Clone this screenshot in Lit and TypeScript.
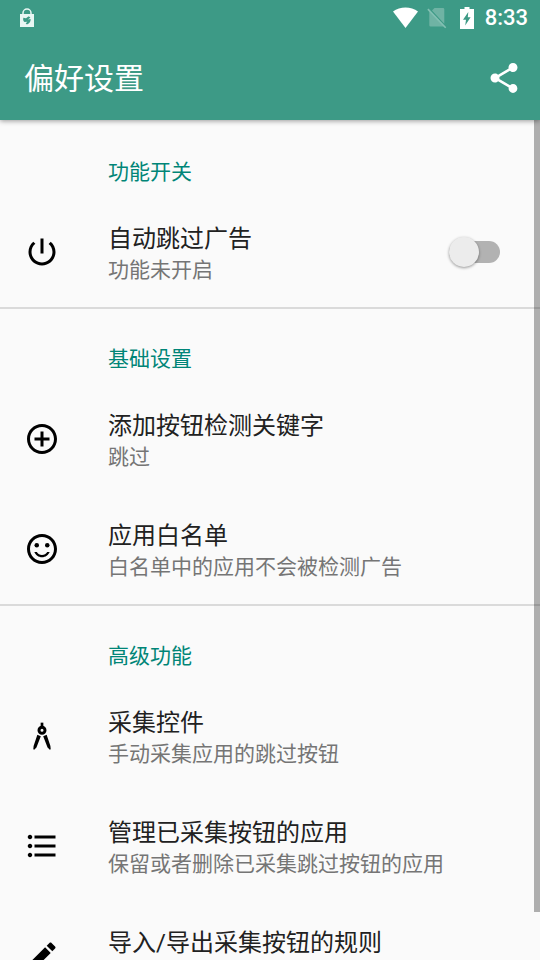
import { LitElement, html, css, svg } from "lit";
import type { SVGTemplateResult } from "lit";
import { customElement, state } from "lit/decorators.js";

const icons: Record<string, SVGTemplateResult> = {
  power: svg`<path d="M13 3h-2v10h2V3zm4.83 2.17l-1.42 1.42C17.99 7.86 19 9.81 19 12c0 3.87-3.13 7-7 7s-7-3.13-7-7c0-2.19 1.01-4.14 2.58-5.42L6.17 5.17C4.23 6.82 3 9.26 3 12c0 4.97 4.03 9 9 9s9-4.03 9-9c0-2.74-1.23-5.18-3.17-6.83z"/>`,
  add: svg`<path d="M13 7h-2v4H7v2h4v4h2v-4h4v-2h-4V7zm-1-5C6.48 2 2 6.48 2 12s4.48 10 10 10 10-4.48 10-10S17.52 2 12 2zm0 18c-4.41 0-8-3.59-8-8s3.59-8 8-8 8 3.59 8 8-3.59 8-8 8z"/>`,
  smile: svg`<circle cx="15.5" cy="9.5" r="1.5"/><circle cx="8.5" cy="9.5" r="1.5"/><path d="M12 16c-1.48 0-2.75-.81-3.45-2H6.88c.8 2.05 2.79 3.5 5.12 3.5s4.32-1.45 5.12-3.5h-1.67c-.7 1.19-1.97 2-3.45 2zm-.01-14C6.47 2 2 6.48 2 12s4.47 10 9.99 10C17.52 22 22 17.52 22 12S17.52 2 11.99 2zM12 20c-4.42 0-8-3.58-8-8s3.58-8 8-8 8 3.58 8 8-3.58 8-8 8z"/>`,
  compass: svg`<path d="M11.1 3.1h1.8v2.4h-1.8z"/><circle cx="12" cy="8.2" r="2" fill="none" stroke="currentColor" stroke-width="2"/><path d="M8.900 11.100l2.300 1.100-2.900 7.400-1.500 1.500-.6-.3.200-2.200zM15.100 11.100l-2.300 1.100 2.900 7.400 1.500 1.500.6-.3-.2-2.200z"/>`,
  list: svg`<path d="M4 10.5c-.83 0-1.5.67-1.5 1.5s.67 1.5 1.5 1.5 1.5-.67 1.5-1.5-.67-1.5-1.5-1.5zm0-6c-.83 0-1.5.67-1.5 1.5S3.17 7.5 4 7.5 5.5 6.83 5.5 6 4.83 4.5 4 4.5zm0 12c-.83 0-1.5.68-1.5 1.5s.68 1.5 1.5 1.5 1.5-.68 1.5-1.5-.67-1.5-1.5-1.5zM7 19h14v-2H7v2zm0-6h14v-2H7v2zm0-8v2h14V5H7z"/>`,
  edit: svg`<path d="M3 17.25V21h3.75L17.81 9.94l-3.75-3.75L3 17.25zM20.71 7.04c.39-.39.39-1.02 0-1.41l-2.34-2.34c-.39-.39-1.02-.39-1.41 0l-1.83 1.83 3.75 3.75 1.83-1.83z"/>`,
  share: svg`<path d="M18 16.08c-.76 0-1.44.3-1.96.77L8.91 12.7c.05-.23.09-.46.09-.7s-.04-.47-.09-.7l7.05-4.11c.54.5 1.25.81 2.04.81 1.66 0 3-1.34 3-3s-1.34-3-3-3-3 1.34-3 3c0 .24.04.47.09.7L8.04 9.81C7.5 9.31 6.79 9 6 9c-1.66 0-3 1.34-3 3s1.34 3 3 3c.79 0 1.5-.31 2.04-.81l7.12 4.16c-.05.21-.08.43-.08.65 0 1.61 1.31 2.92 2.92 2.92s2.92-1.31 2.92-2.92-1.31-2.92-2.92-2.92z"/>`,
};

const icon = (name: string) =>
  html`<svg class="icon" viewBox="0 0 24 24" fill="currentColor" aria-hidden="true">${icons[name]}</svg>`;

const sections = [
  {
    heading: "基础设置",
    items: [
      { icon: "add", title: "添加按钮检测关键字", note: "跳过" },
      { icon: "smile", title: "应用白名单", note: "白名单中的应用不会被检测广告" },
    ],
  },
  {
    heading: "高级功能",
    items: [
      { icon: "compass", title: "采集控件", note: "手动采集应用的跳过按钮" },
      { icon: "list", title: "管理已采集按钮的应用", note: "保留或者删除已采集跳过按钮的应用" },
      { icon: "edit", title: "导入/导出采集按钮的规则", note: "" },
    ],
  },
];

@customElement("app-root")
export class AppRoot extends LitElement {
  @state() private enabled = false;

  static styles = css`
    :host {
      display: flex;
      flex-direction: column;
      height: 100vh;
      overflow: hidden;
      background: #fafafa;
      color: #212121;
      font-family: Roboto, "Noto Sans CJK SC", sans-serif;
    }
    * { box-sizing: border-box; }
    .top {
      position: relative;
      z-index: 1;
      flex: none;
      background: #3d9a86;
      color: #fff;
      box-shadow: 0 1px 5px rgba(0, 0, 0, 0.4);
    }
    .status {
      display: flex;
      align-items: center;
      height: 36px;
      padding: 0 12px 0 20px;
    }
    .status svg { display: block; flex: none; }
    .bag { margin-right: auto; }
    .sim { margin: 0 13px 0 8px; }
    .battery { margin-right: 11px; }
    .clock { font-size: 22px; line-height: 36px; font-weight: 500; }
    .bar {
      display: flex;
      align-items: center;
      justify-content: space-between;
      height: 84px;
      padding: 0 18px 0 24px;
    }
    h1 { margin: 0; padding-top: 2px; font-size: 30px; line-height: 40px; font-weight: 400; }
    button {
      margin: 0;
      padding: 0;
      border: 0;
      background: none;
      color: inherit;
      font: inherit;
      text-align: left;
      cursor: pointer;
    }
    .icon { display: block; flex: none; width: 36px; height: 36px; }
    .body { position: relative; flex: 1; min-height: 0; }
    main { height: 100%; overflow-y: auto; scrollbar-width: none; }
    .thumb {
      position: absolute;
      top: 0;
      right: 0;
      bottom: 48px;
      width: 6px;
      background: rgba(0, 0, 0, 0.3);
      pointer-events: none;
    }
    section + section { box-shadow: inset 0 2px #dadada; }
    h2 {
      margin: 0;
      padding: 37px 24px 10px 108px;
      font-size: 21px;
      line-height: 30px;
      font-weight: 400;
      color: #008577;
    }
    .row {
      display: flex;
      align-items: center;
      gap: 48px;
      width: 100%;
      height: 110px;
      padding: 0 40px 0 24px;
      cursor: pointer;
    }
    .row .icon { color: #000; }
    .text { flex: 1; min-width: 0; }
    .title { display: block; font-size: 24px; line-height: 36px; }
    .note { display: block; min-height: 26px; font-size: 21px; line-height: 26px; color: #757575; }
    .switch {
      appearance: none;
      display: flex;
      align-items: center;
      flex: none;
      width: 51px;
      height: 22px;
      margin: 0;
      border-radius: 12px;
      background: #b2b2b2;
      cursor: pointer;
    }
    .switch::before {
      content: "";
      flex: none;
      width: 30px;
      height: 30px;
      border-radius: 50%;
      background: #ececec;
      box-shadow: 0 1px 3px rgba(0, 0, 0, 0.4);
    }
    .switch:checked { justify-content: flex-end; background: #80c2bb; }
    .switch:checked::before { background: #008577; }
  `;

  render() {
    return html`
      <header class="top">
        <div class="status">
          <svg class="bag" width="14" height="20" viewBox="0 0 14 20" aria-hidden="true">
            <path d="M3 7V5a4 4 0 0 1 8 0v2" fill="none" stroke="#e9f6f3" stroke-width="1.5" />
            <path d="M0 6h14v13H0z" fill="#e9f6f3" />
            <path d="M3.400 9.800c1.200-.1 1.800.7 3 .2l1.900-1.600c1 0 1.800.6 2 1.400L7.800 11.500l2.800-.4c.3 2.400-1 4.600-3.600 5.400l-1.300-.9 1.600-1.900-2.800.2c-1.200-.6-1.800-2.400-1.100-4.100z" fill="#3d9a86" />
          </svg>
          <svg class="wifi" width="27" height="22" viewBox="0 0 27 22" aria-hidden="true">
            <path d="M1 4.500C8-1 19-1 26 4.500L13.500 21z" fill="#fff" />
          </svg>
          <svg class="sim" width="20" height="22" viewBox="0 0 20 22" aria-hidden="true">
            <path d="M7.500 1H16a1.300 1.300 0 0 1 1.300 1.300v14.400L5 3.600zM2.300 3.600L17.300 19.500H3.600a1.300 1.300 0 0 1-1.300-1.300z" fill="#6fb3a4" />
            <path d="M.9 2.100l17.800 18.600" stroke="#83c0b3" stroke-width="1.600" fill="none" />
          </svg>
          <svg class="battery" width="14" height="22" viewBox="0 0 14 22" aria-hidden="true">
            <path d="M4.500 0h5v2H14v20H0V2h4.500z" fill="#fff" />
            <path d="M8.300 5L3 12.800h3L5.200 18.500l5.400-8.300H7.800z" fill="#3d9a86" />
          </svg>
          <span class="clock">8:33</span>
        </div>
        <div class="bar">
          <h1>偏好设置</h1>
          <button type="button" aria-label="分享">${icon("share")}</button>
        </div>
      </header>
      <div class="body">
        <main>
          <section>
            <h2>功能开关</h2>
            <label class="row">
              ${icon("power")}
              <span class="text">
                <span class="title">自动跳过广告</span>
                <span class="note">功能未开启</span>
              </span>
              <input
                class="switch"
                type="checkbox"
                role="switch"
                .checked=${this.enabled}
                @change=${(e: Event) => (this.enabled = (e.target as HTMLInputElement).checked)}
              />
            </label>
          </section>
          ${sections.map(
            (s) => html`
              <section>
                <h2>${s.heading}</h2>
                ${s.items.map(
                  (item) => html`
                    <button type="button" class="row">
                      ${icon(item.icon)}
                      <span class="text">
                        <span class="title">${item.title}</span>
                        <span class="note">${item.note}</span>
                      </span>
                    </button>
                  `
                )}
              </section>
            `
          )}
        </main>
        <div class="thumb"></div>
      </div>
    `;
  }
}
